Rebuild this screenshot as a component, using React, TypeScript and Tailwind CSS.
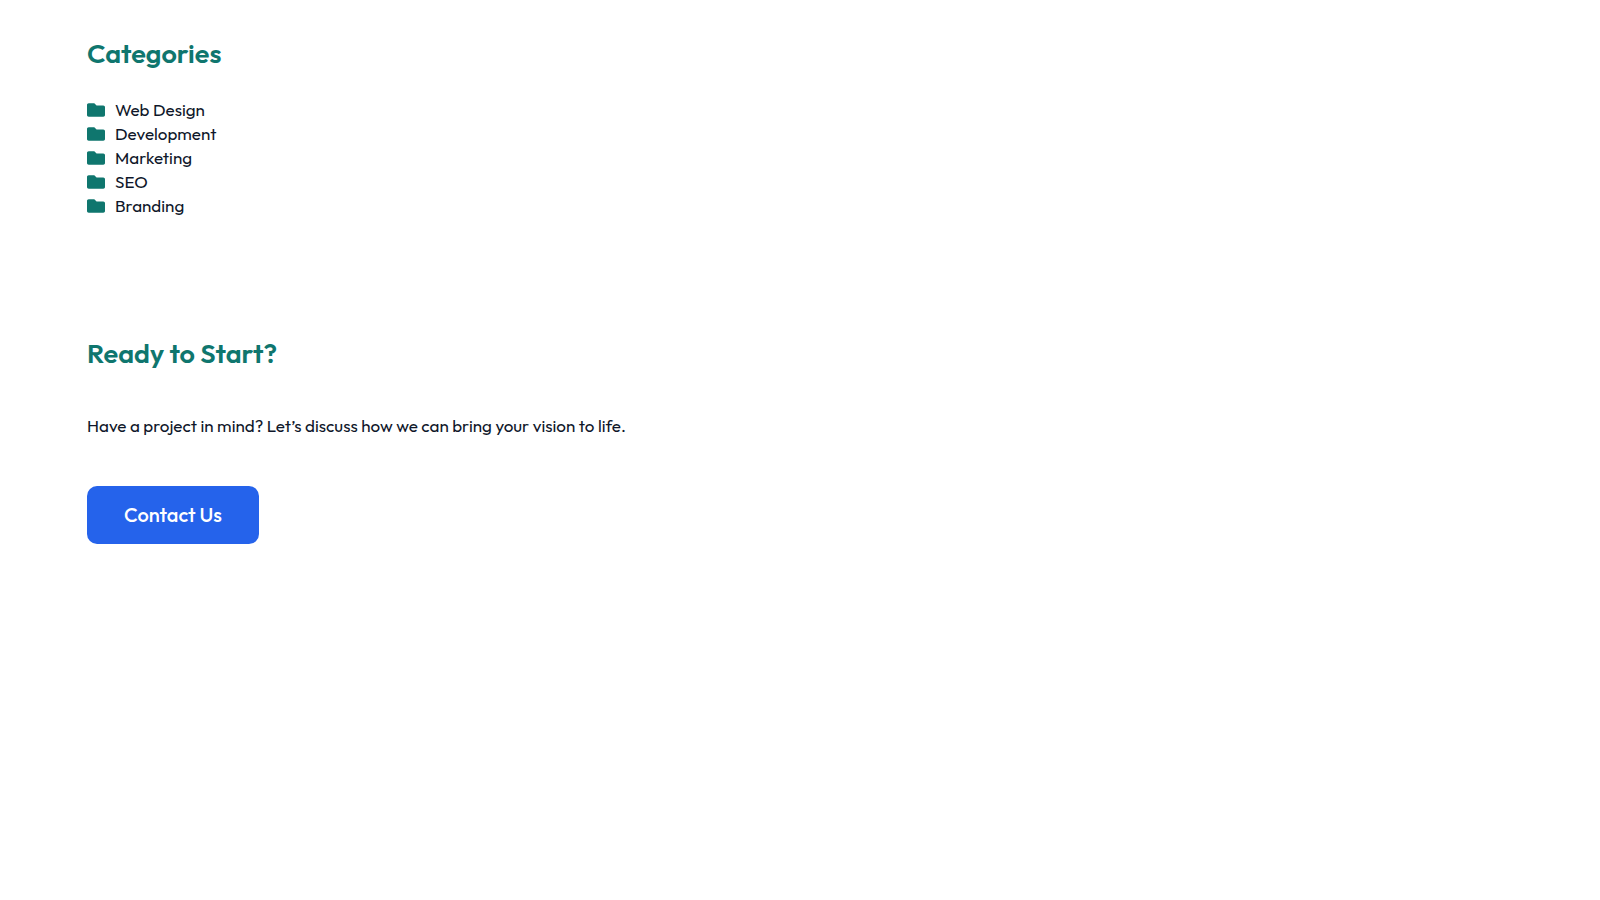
import { FaFolder } from "react-icons/fa";

const categories = ["Web Design", "Development", "Marketing", "SEO", "Branding"];

export default function App() {
  return (
    <main className="min-h-screen bg-white px-[87px] py-8 font-['Outfit','Lato',sans-serif] text-[17px] text-[#0f172a]">
      {/* Categories */}
      <section>
        <h2 className="text-[27px] leading-[42px] font-semibold text-[#0f766e]">
          Categories
        </h2>
        <ul className="mt-6">
          {categories.map((category) => (
            <li key={category} className="flex items-center gap-2.5 leading-6">
              <FaFolder className="size-[18px] text-[#0f766e]" />
              {category}
            </li>
          ))}
        </ul>
      </section>

      {/* Call to action */}
      <section className="mt-[114px]">
        <h2 className="text-[27px] leading-[42px] font-semibold text-[#0f766e]">
          Ready to Start?
        </h2>
        <p className="mt-9 leading-8">
          Have a project in mind? Let’s discuss how we can bring your vision to
          life.
        </p>
        <a
          href="#contact"
          className="mt-11 inline-block rounded-[10px] bg-[#2563eb] px-[37px] py-4 text-xl leading-[26px] font-medium text-white"
        >
          Contact Us
        </a>
      </section>
    </main>
  );
}
